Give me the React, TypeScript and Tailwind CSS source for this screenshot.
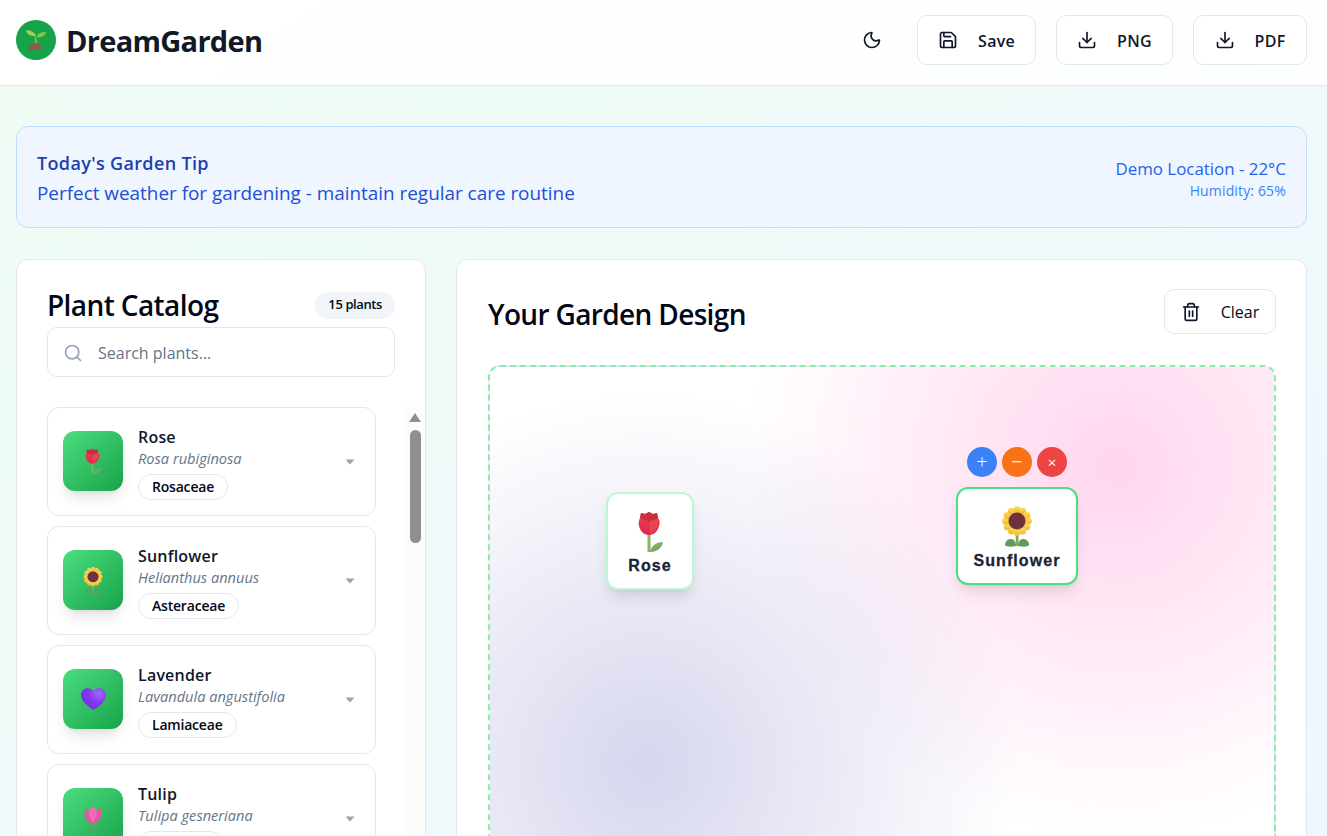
import React from 'react';
import { Moon, Save, Download, Search, Trash2 } from 'lucide-react';

const RoseIcon: React.FC<{ size: number; faded?: boolean }> = ({ size, faded }) => (
  <svg width={size} height={size * 1.03} viewBox="0 0 40 41" aria-label="rose">
    <defs>
      <linearGradient id="roseHead" x1="0" y1="0" x2="0" y2="1">
        <stop offset="0" stopColor="#e8434a" />
        <stop offset="1" stopColor="#e5254f" />
      </linearGradient>
      <linearGradient id="roseLeaf" x1="0" y1="0" x2="1" y2="1">
        <stop offset="0" stopColor="#9cbc5a" />
        <stop offset="1" stopColor="#5f9a78" />
      </linearGradient>
    </defs>
    <g opacity={faded ? 0.7 : 1}>
      <rect x="17.5" y="22" width="3" height="19" fill="#8db55a" />
      <path d="M20 41 C21 35 26 31 33 31 C32 37 27 41 20 41 Z" fill="url(#roseLeaf)" />
    </g>
    <path d="M11 2 L15 3 L19 1 L23 3 L27 2 L28 7 C30 9 30 12 29 15 C28 20 24 24 19 24 C14 24 10 20 9 15 C8 12 9 9 10 7 Z" fill="url(#roseHead)" />
    <path d="M11 2 L15 3 L19 1 L23 3 L27 2 L28 7 C25 8 22 9 19 11 C16 9 13 8 10 7 Z" fill="#c92f3c" />
    <path d="M19 11 C23 9 26 9 28 8 C29 14 26 20 20 23 Z" fill="#ea4d50" opacity="0.7" />
  </svg>
);

const SunflowerIcon: React.FC<{ size: number; faded?: boolean }> = ({ size, faded }) => {
  const petals = Array.from({ length: 12 }, (_, i) => (i * Math.PI) / 6);
  return (
    <svg width={size} height={size * 1.03} viewBox="0 0 40 41" aria-label="sunflower">
      <defs>
        <linearGradient id="sunPetal" x1="0" y1="0" x2="0" y2="1">
          <stop offset="0" stopColor="#fbe04d" />
          <stop offset="1" stopColor="#f5b53f" />
        </linearGradient>
      </defs>
      <g opacity={faded ? 0.7 : 1}>
        <rect x="18.7" y="24" width="2.8" height="16" fill="#7fb04d" />
        <path d="M19 40 C14 41 9 41 8 39 C8 35 11 33 14 33 C17 33 19 36 19 40 Z" fill="#5f9a5e" />
        <path d="M21 40 C26 41 31 41 32 39 C32 35 29 33 26 33 C23 33 21 36 21 40 Z" fill="#5f9a5e" />
      </g>
      <g fill="url(#sunPetal)">
        <circle cx="20" cy="15" r="11" />
        {petals.map((a, i) => (
          <circle key={i} cx={20 + Math.cos(a) * 11.5} cy={15 + Math.sin(a) * 11.5} r="3.4" />
        ))}
      </g>
      <circle cx="20" cy="15" r="8.5" fill="#6e3140" />
    </svg>
  );
};

const HeartIcon: React.FC<{ size: number }> = ({ size }) => (
  <svg width={size} height={size} viewBox="0 0 40 40" aria-label="purple heart">
    <defs>
      <radialGradient id="heart" cx="0.72" cy="0.25" r="0.75">
        <stop offset="0" stopColor="#a368fb" />
        <stop offset="0.55" stopColor="#8437ee" />
        <stop offset="1" stopColor="#7c2fe8" />
      </radialGradient>
    </defs>
    <path d="M20 37 C12 31 0 23 0 13 C0 6 5 2 11 2 C15 2 18 4 20 7 C22 4 25 2 29 2 C35 2 40 6 40 13 C40 23 28 31 20 37 Z" fill="url(#heart)" />
  </svg>
);

const TulipIcon: React.FC<{ size: number }> = ({ size }) => (
  <svg width={size} height={size * 1.03} viewBox="0 0 40 41" aria-label="tulip">
    <g opacity="0.6">
      <rect x="18.6" y="26" width="2.8" height="14" fill="#7c9a5e" />
      <path d="M19 40 C14 39 10 36 9 33 C14 33 18 35 19 40 Z" fill="#6f9a5e" />
      <path d="M21 40 C26 39 30 36 31 33 C26 33 22 35 21 40 Z" fill="#6f9a5e" />
    </g>
    <path d="M8 4 L14 9 L20 1 L26 9 L32 4 C34 12 33 20 28 25 C24 29 16 29 12 25 C7 20 6 12 8 4 Z" fill="#e455a5" />
    <path d="M20 1 L26 9 C27 15 24 21 20 27 C16 21 13 15 14 9 Z" fill="#ee6db5" />
  </svg>
);

const SeedlingIcon = () => (
  <svg width="22" height="22" viewBox="0 0 22 22" aria-label="seedling">
    <path d="M10 5 C11 8 12 11 12 16 L10 16 C10 12 10 9 9.5 6 Z" fill="#8fbf45" />
    <path d="M11 6.5 C9 3 5 0.5 1 1.5 C2 5.5 6 8 11 6.5 Z" fill="#a3d14d" />
    <path d="M11.5 8 C12.5 5 16 2.5 21 3.5 C20 7 15.5 9 11.5 8 Z" fill="#8cc63f" />
    <path d="M3 21 C3 17 7 14 10.5 14 C14 14 17 17 17 21 Z" fill="#8d5a52" />
  </svg>
);

const plants = [
  { name: 'Rose', latin: 'Rosa rubiginosa', family: 'Rosaceae', icon: <RoseIcon size={26} faded /> },
  { name: 'Sunflower', latin: 'Helianthus annuus', family: 'Asteraceae', icon: <SunflowerIcon size={26} faded /> },
  { name: 'Lavender', latin: 'Lavandula angustifolia', family: 'Lamiaceae', icon: <HeartIcon size={25} /> },
  { name: 'Tulip', latin: 'Tulipa gesneriana', family: 'Liliaceae', icon: <TulipIcon size={26} /> },
];

const HeaderButton: React.FC<{ icon: React.ReactNode; label: string; className?: string }> = ({ icon, label, className }) => (
  <button className={`h-[50px] px-5 flex items-center justify-center gap-5 bg-white border border-[#e2e8f0] rounded-[10px] text-[16px] font-semibold tracking-[0.3px] text-[#0f172a] ${className ?? ''}`}>
    {icon}
    <span className="pt-[2px]">{label}</span>
  </button>
);

const ActionDot: React.FC<{ className: string; label: string }> = ({ className, label }) => (
  <span className={`w-[30px] h-[30px] rounded-full flex items-center justify-center text-white leading-none ${className}`}>
    {label}
  </span>
);

export default function App() {
  return (
    <div className="h-[836px] overflow-hidden bg-gradient-to-br from-[#f0fdf4] to-[#eff6ff] font-['Open_Sans',sans-serif] text-[#020817]">
      <header className="h-[86px] pb-[6px] bg-white/90 border-b border-[#e2e8f0] pl-4 pr-5 flex items-center justify-between">
        <div className="flex items-center gap-[10px]">
          <div className="w-10 h-10 rounded-full bg-[#16a34a] flex items-center justify-center">
            <SeedlingIcon />
          </div>
          <h1 className="pt-[2px] text-[29px] font-bold tracking-[-0.7px] text-[#111827]">DreamGarden</h1>
        </div>
        <div className="flex items-center gap-5">
          <Moon size={20} className="mr-[15px] text-[#0f172a]" />
          <HeaderButton icon={<Save size={20} />} label="Save" />
          <HeaderButton icon={<Download size={20} />} label="PNG" />
          <HeaderButton icon={<Download size={20} />} label="PDF" className="w-[114px]" />
        </div>
      </header>
      <main className="pl-4 pr-5 pt-10">
        <div className="h-[102px] rounded-xl border border-[#bfdbfe] bg-[#eff6ff] px-5 flex items-center justify-between">
          <div className="pt-[1px]">
            <div className="text-[18px] leading-[30px] font-semibold tracking-[0.35px] text-[#1e40af]">Today's Garden Tip</div>
            <div className="text-[18.9px] leading-[30px] text-[#1d4ed8]">Perfect weather for gardening - maintain regular care routine</div>
          </div>
          <div className="text-right pt-[4px]">
            <div className="text-[16.9px] leading-[24px] text-[#2563eb]">Demo Location - 22°C</div>
            <div className="text-[14px] leading-[20px] tracking-[0.15px] text-[#3b82f6]">Humidity: 65%</div>
          </div>
        </div>
        <div className="mt-[31px] flex gap-[30px]">
          <aside className="relative w-[410px] h-[700px] bg-white border border-[#e2e8f0] rounded-xl px-[30px] pt-[29px]">
            <div className="flex items-center justify-between h-[32px]">
              <h2 className="text-[28px] leading-[32px] font-semibold tracking-[-0.6px]">Plant Catalog</h2>
              <span className="h-[27px] px-[13px] flex items-center rounded-full bg-[#f1f5f9] text-[13px] font-semibold tracking-[-0.4px]">15 plants</span>
            </div>
            <div className="mt-[6px] h-[50px] pt-[1px] border border-[#e2e8f0] rounded-[10px] flex items-center px-[15px] gap-[15px] text-[16px] text-[#64748b]">
              <Search size={20} className="text-[#94a3b8]" />
              Search plants...
            </div>
            <div className="mt-[30px] flex flex-col gap-[10px] w-[329px]">
              {plants.map((p) => (
                <div key={p.name} className="h-[109px] shrink-0 border border-[#e2e8f0] rounded-xl flex items-center px-[15px] gap-[15px]">
                  <div className="w-[60px] h-[60px] -mt-[1px] shrink-0 rounded-xl bg-gradient-to-br from-[#4ade80] to-[#16a34a] shadow-lg flex items-center justify-center">
                    {p.icon}
                  </div>
                  <div className="flex-1 pt-[1px]">
                    <div className="font-[550] text-[16px] leading-[24px] tracking-[0.2px] text-[#0f172a]">{p.name}</div>
                    <div className="-mt-[1px] italic text-[14.6px] leading-[20px] text-[#64748b]">{p.latin}</div>
                    <span className="mt-[6px] h-[26px] px-[13px] inline-flex items-center border border-[#e2e8f0] rounded-full text-[14px] font-semibold tracking-[-0.2px]">{p.family}</span>
                  </div>
                  <svg width="10" height="6" viewBox="0 0 10 6" className="mr-[5px] text-[#9ca3af]">
                    <path d="M0.5 0.5 H9.5 L5 5.5 Z" fill="currentColor" />
                  </svg>
                </div>
              ))}
            </div>
            {/* scrollbar */}
            <div className="absolute right-0 top-[147px] bottom-0 w-[20px] bg-[#fcfcfc] flex flex-col items-center pt-[6px]">
              <div className="w-0 h-0 border-x-[6px] border-x-transparent border-b-[9px] border-b-[#8f8f8f]" />
              <div className="mt-[8px] w-[11px] h-[113px] rounded-full bg-[#8f8f8f]" />
            </div>
          </aside>
          <section className="flex-1 h-[700px] bg-white border border-[#e2e8f0] rounded-xl pl-[31px] pr-[30px] pt-[29px]">
            <div className="h-[45px] flex items-center justify-between">
              <h2 className="pt-[4px] text-[28px] leading-[42px] font-semibold tracking-[-0.65px]">Your Garden Design</h2>
              <button className="h-[45px] w-[112px] flex items-center justify-center gap-5 bg-white border border-[#e2e8f0] rounded-[10px] text-[16px] font-medium">
                <Trash2 size={20} className="text-[#0f172a]" />
                Clear
              </button>
            </div>
            <div className="relative mt-[31px] h-[500px] rounded-xl border-2 border-dashed border-[#86efac] bg-white bg-[radial-gradient(circle_at_20%_80%,rgba(120,119,198,0.3),transparent_50%),radial-gradient(circle_at_80%_20%,rgba(255,119,198,0.3),transparent_50%)]">
              <div className="absolute left-[116px] top-[125px] w-[88px] h-[98px] pt-[17px] bg-white border-2 border-[#bbf7d0] rounded-xl shadow-lg flex flex-col items-center">
                <RoseIcon size={40} />
                <span className="mt-[4px] font-['Liberation_Sans',sans-serif] font-bold text-[16px] leading-[20px] tracking-[1.1px] text-[#1a2333] [-webkit-text-stroke:0.3px_#1a2333]">Rose</span>
              </div>
              <div className="absolute left-[466px] top-[120px] w-[122px] h-[98px] pt-[17px] bg-white border-2 border-[#4ade80] rounded-xl shadow-lg flex flex-col items-center">
                <div className="absolute -top-[42px] left-0 right-0 flex justify-center gap-[5px]">
                  <ActionDot className="bg-[#3b82f6] text-[20px] font-light" label="+" />
                  <ActionDot className="bg-[#f97316] text-[20px] font-light" label="−" />
                  <ActionDot className="bg-[#ef4444] text-[15px]" label="×" />
                </div>
                <SunflowerIcon size={40} />
                <span className="mt-[4px] font-['Liberation_Sans',sans-serif] font-bold text-[16px] leading-[20px] tracking-[1.1px] text-[#1a2333] [-webkit-text-stroke:0.3px_#1a2333]">Sunflower</span>
              </div>
            </div>
          </section>
        </div>
      </main>
    </div>
  );
}
